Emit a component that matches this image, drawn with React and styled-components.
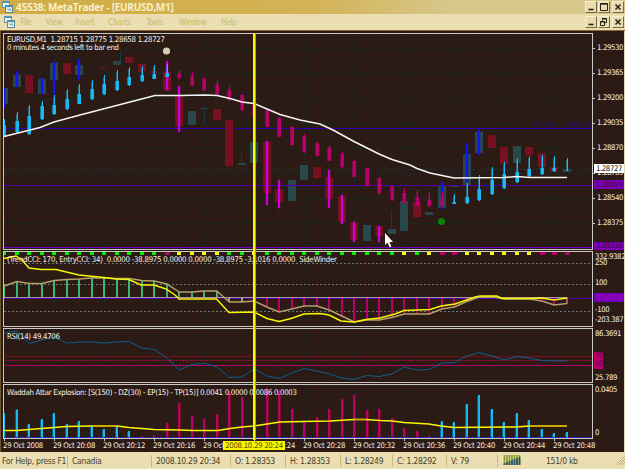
import React from 'react';
import styled, { createGlobalStyle } from 'styled-components';

const C = {
	bg: '#2c1a14',
	cyan: '#18b8f4',
	cyanDark: '#0c5c84',
	pink: '#b8006c',
	magenta: '#e000e0',
	blue: '#1414ff',
	teal: '#28484c',
	purple: '#5000a8',
	yellow: '#f8f800',
	tan: '#b4a06c',
	green: '#3cb474',
	grid: '#182a28',
	frame: '#c8c8c4',
};

// bar number -> x on the chart
const bx = (i) => 4.3 + 12.5 * i;

// [index, kind, top, bottom]
const boxes = [
	[0, 't', 88, 104], [1, 't', 75, 87], [2, 'r', 75, 93], [3, 't', 79, 94], [4, 't', 63, 80],
	[5, 'r', 63, 74], [6, 't', 65, 75], [8, 'r', 67, 68], [9, 't', 61, 65], [10, 'r', 57, 63],
	[11, 'r', 64, 72], [12, 'r', 71, 73], [13, 'r', 72, 91], [14, 'r', 96, 126], [15, 't', 111, 125],
	[16, 't', 108, 109], [17, 'r', 109, 120], [18, 'r', 120, 166], [19, 't', 163, 165], [20, 't', 142, 163],
	[21, 'r', 142, 193], [22, 'r', 189, 202], [23, 't', 180, 201], [24, 't', 165, 180], [25, 'r', 167, 178],
	[26, 'r', 177, 199], [27, 'r', 196, 222], [28, 'r', 222, 240], [29, 't', 225, 241], [30, 'r', 226, 236],
	[31, 't', 229, 234], [32, 't', 201, 231], [33, 'r', 202, 217], [34, 't', 212, 215], [35, 't', 185, 208],
	[36, 't', 185, 187], [37, 't', 154, 185], [38, 't', 132, 153], [39, 'r', 135, 148], [40, 'r', 147, 164],
	[41, 't', 146, 163], [42, 'r', 147, 155], [43, 'r', 153, 167], [44, 'r', 167, 172], [45, 't', 169, 172],
];

// [index, colour, top, bottom]
const bars = [
	[0, 'blue', 88, 108], [1, 'blue', 71, 87], [3, 'blue', 78, 94], [4, 'blue', 62, 94], [6, 'blue', 59, 80],
	[13, 'magenta', 61, 90], [14, 'magenta', 86, 132], [21, 'magenta', 141, 205], [22, 'magenta', 180, 208],
	[26, 'magenta', 170, 208], [27, 'magenta', 195, 224], [28, 'magenta', 222, 242], [30, 'magenta', 226, 242],
	[35, 'blue', 182, 209], [37, 'blue', 143, 182], [38, 'blue', 130, 155],
];

// [index, colour, wick top, wick bottom, body top, body bottom]
const candles = [
	[0, 'cyan', 119, 137, 125, 137], [1, 'cyan', 112, 133, 121, 132], [2, 'cyan', 105, 135, 116, 134],
	[3, 'cyan', 101, 120, 106, 119], [4, 'cyan', 95, 115, 105, 114], [5, 'cyan', 89, 110, 99, 109],
	[6, 'cyan', 84, 104, 94, 104], [7, 'cyan', 80, 100, 89, 99], [8, 'cyan', 75, 95, 84, 94],
	[9, 'cyan', 70, 91, 81, 90], [10, 'cyan', 67, 86, 77, 85], [11, 'cyan', 66, 82, 75, 81],
	[12, 'cyan', 65, 79, 74, 79], [13, 'cyan', 64, 77, 73, 77], [14, 'pink', 70, 79, 74, 78],
	[15, 'pink', 72, 86, 76, 85], [16, 'pink', 77, 91, 79, 90], [17, 'pink', 80, 96, 85, 94],
	[18, 'pink', 86, 101, 90, 100], [19, 'pink', 94, 111, 95, 110], [20, 'pink', 104, 117, 104, 117],
	[21, 'pink', 108, 127, 110, 127], [22, 'pink', 117, 137, 118, 137], [23, 'pink', 126, 146, 127, 145],
	[24, 'pink', 134, 153, 136, 152], [25, 'pink', 141, 156, 143, 156], [26, 'pink', 145, 161, 148, 161],
	[27, 'pink', 152, 168, 154, 167], [28, 'pink', 160, 177, 161, 177], [29, 'pink', 168, 186, 168, 186],
	[30, 'pink', 177, 194, 178, 193], [31, 'pink', 186, 201, 186, 200], [32, 'pink', 188, 204, 193, 203],
	[33, 'pink', 190, 206, 197, 206], [34, 'pink', 192, 207, 200, 206], [35, 'pink', 192, 207, 199, 206],
	[36, 'cyan', 194, 204, 202, 204], [37, 'cyan', 183, 204, 197, 203], [38, 'cyan', 175, 201, 189, 200],
	[39, 'cyan', 167, 195, 180, 194], [40, 'cyan', 162, 189, 174, 188], [41, 'cyan', 158, 183, 172, 182],
	[42, 'cyan', 156, 177, 169, 176], [43, 'cyan', 155, 175, 168, 174], [44, 'cyan', 156, 172, 168, 171],
	[45, 'cyan', 158, 171, 170, 170],
];

const averageLine = '4,136.5 16,133.5 40,127.5 54,122 80,115 105,108.5 130,102 155,95.5 180,95.5 205,95 217,95.5 230,98.5 242,102 254,103.5 267,109 280,114.5 300,120 320,124 333,130 354,141.5 379,154 392,159.5 410,165 417,168.5 430,173 442,175.5 454,178 504,177.5 517,176.5 530,177.5 567,177.5';

const signals = 'gggggggggggggpyyyyggygggggggggggygyppyyyyyyppp';
const signalColor = { g: '#00f000', y: '#f8f800', p: '#b8006c' };

const trendCci = [286, 281.5, 283.5, 283.5, 280.5, 279.5, 279, 278, 278, 278.5, 278.5, 280.5, 281, 284, 292, 292, 291, 291, 302, 302, 301, 307, 312, 309, 306, 306, 310, 316, 322, 320, 320, 317.5, 314, 314, 314, 309, 307, 301.5, 297, 296.5, 299, 299, 299, 301, 305, 303.5];
const entryCci = '4,258.5 16,256 22,260 29,268 41,269.5 56,269.5 79,275 104,277.5 116,279 129,279.5 141,285 154,285 166,289 175,295 179,299 204,299 216.5,299 229,312.5 254,312 267,318.5 279,321.5 291,318.5 304,314 320,313.5 329,315 341,321 354,322 366,319.5 380,318 395,314 404,310.5 430,309.5 441,306 455,304 475,297 480,296 497,296 502,298.5 530,298.5 541,298 554,300 567,298';

const rsi = [333, 331, 343.5, 340, 337, 343, 342, 342, 343, 342, 341.5, 348, 349.5, 358, 370, 364.5, 363, 367, 377.5, 377, 369, 376, 378.5, 373, 368.5, 371, 374, 378, 379.5, 375.5, 376.5, 374, 367, 370, 369.5, 363, 362.5, 356, 352.5, 356, 360, 356.5, 358, 360.5, 361, 361];

const volume = [413, 409.5, 424, 419, 413, 424, 421, 425, 429, 426, 431, 436, 435, 423, 403, 416, 419, 414, 391, 397, 389, 388, 390, 409, 422, 417, 409, 399, 395, 410, 409, 418, 428, 431, 436, 421, 422, 404, 395, 409, 422, 413, 420, 429, 433, 432];
const explosion = '4,430.5 17,430.5 29,429.5 41,428.5 54,427.5 66,426.5 92,426 117,426 129,427.5 142,428.5 154,429.5 180,430 192,430.5 218,430.5 230,428.5 242,427 254,426 267,424 280,422 304,421.5 330,421 354,419.5 366,419.5 380,420.5 392,421 404,422.5 429,424 441,426 454,427.5 516,427 530,426 567,426';

const points = (values) => values.map((y, i) => `${bx(i)},${y}`).join(' ');

const times = ['2008', '20:08', '20:12', '20:16', '20:20', '20:24', '20:28', '20:32', '20:36', '20:40', '20:44', '20:48'];

function Chart({ top, height, children }) {
	return (
		<Plot width="590" height={height} viewBox={`3 ${top} 590 ${height}`}>
			{Array.from({ length: 23 }, (_, i) => (
				<path key={i} d={`M${29.5 + 25 * i} ${top}v${height}`} stroke={C.grid} strokeDasharray="3 3" />
			))}
			{children}
			<path d={`M3.5 ${top}v${height}M592.5 ${top}v${height}`} stroke={C.frame} />
			<path d={`M3 ${top + 0.5}h590M3 ${top + height - 0.5}h590`} stroke={C.frame} />
		</Plot>
	);
}

function PriceChart() {
	return (
		<Chart top={33} height={217}>
			<defs>
				<pattern id="bear" width="4" height="4" patternUnits="userSpaceOnUse">
					<rect width="4" height="4" fill="#6c1416" />
					<rect width="1" height="1" fill="#9c0c48" />
					<rect x="2" y="2" width="1" height="1" fill="#9c0c48" />
				</pattern>
			</defs>
			{Array.from({ length: 8 }, (_, i) => (
				<path key={i} d={`M4 ${48.5 + 25 * i}h588`} stroke={C.grid} strokeDasharray="3 3" />
			))}
			<path d="M4 169.5h588" stroke="#1c2c2c" />
			<path d="M4 128.5h588" stroke="#3000b8" strokeDasharray="1 1" shapeRendering="crispEdges" />
			<path d="M120.5 50v11M241.5 150v13M391.5 210v19M204.5 108v16" stroke="#123c44" />
			{boxes.map(([i, kind, y1, y2]) => (
				<rect key={i} x={Math.round(bx(i) - 4)} y={y1} width="8" height={y2 - y1} fill={kind === 't' ? C.teal : 'url(#bear)'} />
			))}
			<path d="M4 185.5h588" stroke={C.purple} />
			<path d="M4 247.5h588" stroke="#6c00c0" />
			{bars.map(([i, color, y1, y2]) => (
				<rect key={i} x={Math.round(bx(i) - 1)} y={y1} width="2" height={y2 - y1} fill={C[color]} stroke={color === 'blue' ? '#1818b0' : '#a000a8'} strokeWidth=".5" />
			))}
			{candles.map(([i, color, y1, y2, b1, b2]) => (
				<g key={i} fill={C[color]}>
					<rect x={Math.round(bx(i))} y={y1} width="1" height={y2 - y1} />
					<rect x={Math.round(bx(i) - 1)} y={y1 + 2} width="1" height={y2 - y1 - 2} opacity=".5" />
					<rect x={Math.round(bx(i) - 2)} y={b1} width="4" height={b2 - b1} opacity=".6" />
					<rect x={Math.round(bx(i) - 1)} y={b1} width="3" height={b2 - b1} />
				</g>
			))}
			<polyline points={averageLine} fill="none" stroke="#f4f4f0" strokeWidth="1.6" />
			<circle cx="166.5" cy="51" r="3.6" fill="#d8ccb4" />
			<circle cx="441.5" cy="221.5" r="3.5" fill="#088408" />
			<Caption x="7" y="42" textLength="158">EURUSD,M1&nbsp; 1.28715 1.28775 1.28658 1.28727</Caption>
			<Caption x="7" y="50.3" textLength="112">0 minutes 4 seconds left to bar end</Caption>
			<Level x="534" y="126.5" textLength="57">132.8-&nbsp;&nbsp; 1.29000</Level>
			<path d="M385 233v12l2.6-2.2 2 4.4 1.8-.8-2-4.3h3.6z" fill="#fff" />
		</Chart>
	);
}

function CciChart() {
	return (
		<Chart top={251} height={76}>
			<path d="M4 263.5h588M4 284.5h588M4 311.5h588" stroke="#6c7878" strokeDasharray="2 2" />
			<path d="M4 298.5h588" stroke={C.purple} />
			{trendCci.map((y, i) => (
				<rect
					key={i}
					x={Math.round(bx(i) - 1)}
					y={Math.min(y, 298)}
					width="2"
					height={Math.abs(298 - y)}
					fill={i < 18 ? C.green : i < 21 ? C.tan : C.pink}
				/>
			))}
			<path d="M4 297.5h563" stroke="#a89c98" />
			<polyline points={points(trendCci)} fill="none" stroke={C.tan} strokeWidth="1.4" />
			<path d="M567 297v7" stroke={C.tan} />
			<polyline points={entryCci} fill="none" stroke={C.yellow} strokeWidth="1.4" />
			{signals.split('').map((s, i) => (
				<rect key={i} x={Math.round(bx(i) - 2)} y="252" width={s === 'p' ? 5 : 4} height="3" fill={signalColor[s]} />
			))}
			<Caption x="7" y="262" textLength="330">(TrendCCI: 170, EntryCCI: 34)&nbsp; 0.0000 -38.8975 0.0000 0.0000 -38.8975 -3.1016 0.0000&nbsp; SideWinder</Caption>
		</Chart>
	);
}

function RsiChart() {
	return (
		<Chart top={328} height={55}>
			<path d="M5 356.5h587" stroke="#781018" />
			<path d="M5 360.5h587" stroke="#a00c3c" strokeDasharray="2 1" />
			<path d="M5 365.5h587" stroke={C.pink} />
			<polyline points={points(rsi)} fill="none" stroke="#0c6090" />
			<Caption x="7" y="338.5" textLength="53">RSI(14) 49.4706</Caption>
		</Chart>
	);
}

function VolumeChart() {
	return (
		<Chart top={384} height={55}>
			{volume.map((y, i) => {
				const up = i < 11 || i > 34;
				return (
					<g key={i}>
						<rect x={Math.round(bx(i) - 1)} y={y} width="2" height={438 - y} fill={up ? C.cyan : C.pink} />
						<rect x={Math.round(bx(i) + (up ? -2 : 1))} y={y + 1} width="1" height={437 - y} fill={up ? C.cyanDark : '#70101c'} />
					</g>
				);
			})}
			<polyline points={explosion} fill="none" stroke={C.yellow} strokeWidth="1.5" />
			<path d="M92 426h24M354 419.5h12M530 426h37" stroke="#c8a000" strokeWidth="1.5" />
			<path d="M4 437.5h588" stroke="#2828e0" strokeDasharray="2 1" />
			<Caption x="7" y="395" textLength="290">Waddah Attar Explosion: [S(150) - DZ(30) - EP(15) - TP(15)] 0.0041 0.0000 0.0086 0.0003</Caption>
		</Chart>
	);
}

function AppIcon() {
	return (
		<svg width="12" height="12" viewBox="0 0 12 12">
			<rect x=".5" y=".5" width="7" height="6" fill="#e8f0f0" stroke="#6898a8" />
			<path d="M1 1.5h6" stroke="#4890b8" />
			<rect x="3.5" y="4.5" width="7" height="7" fill="#f4f4ec" stroke="#588ca0" />
			<path d="M4 5.5h6" stroke="#4890b8" strokeWidth="1.3" />
			<path d="M5 7.5l1.5 2 1.2-2 1.5 2.5" fill="none" stroke="#68a0b4" />
		</svg>
	);
}

function WindowButtons({ restore }) {
	return (
		<Buttons>
			<WinButton>
				<svg width="10" height="10"><path d="M2.5 7.5h5" stroke="#282418" strokeWidth="1.6" /></svg>
			</WinButton>
			<WinButton>
				{restore ? (
					<svg width="10" height="10" fill="none" stroke="#282418"><path d="M3.5 3.5v-2h4v4h-2M3 2h5M1.5 4.5h4v4h-4zM1 5h5" /></svg>
				) : (
					<svg width="10" height="10" fill="none" stroke="#282418"><path d="M1.5 1.5h7v7h-7zM1 2.2h8" /></svg>
				)}
			</WinButton>
			<WinButton $apart>
				<svg width="10" height="10"><path d="M2.5 2.5l5 5M7.5 2.5l-5 5" stroke="#282418" strokeWidth="1.5" /></svg>
			</WinButton>
		</Buttons>
	);
}

function App() {
	return (
		<Window>
			<GlobalStyle />
			<TitleBar>
				<AppIcon />
				<Title>45538: MetaTrader - [EURUSD,M1]</Title>
				<WindowButtons />
			</TitleBar>
			<MenuBar>
				<AppIcon />
				<Menu>
					<MenuItem $width={26}>File</MenuItem>
					<MenuItem $width={30}>View</MenuItem>
					<MenuItem $width={32}>Insert</MenuItem>
					<MenuItem $width={37}>Charts</MenuItem>
					<MenuItem $width={33}>Tools</MenuItem>
					<MenuItem $width={43}>Window</MenuItem>
					<MenuItem $width={30}>Help</MenuItem>
				</Menu>
				<WindowButtons restore />
			</MenuBar>
			<Workspace>
				<Row>
					<PriceChart />
					<Scale>
						<PriceList>
							{['1.29530', '1.29365', '1.29200', '1.29035', '1.28870', '1.28705', '1.28540', '1.28375'].map((p) => <Price key={p}>{p}</Price>)}
						</PriceList>
						<Tag $top={131} $height={9} $bg="#fff" $color="#202020">1.28727</Tag>
						<Tag $top={147} $height={9} $bg="#8000b8" $color="#30104c">1.28619</Tag>
						<Tag $top={209} $height={8} $bg="#8000b8" $color="#30104c">1.28210</Tag>
					</Scale>
				</Row>
				<Row>
					<CciChart />
					<Scale>
						<Value $space={2}>332.9382</Value>
						<Value $space={-2}>250</Value>
						<Value $space={12}>100</Value>
						<Value $space={19}>-100</Value>
						<Value $space={2}>-203.387</Value>
						<Tag $top={42} $height={9} $bg="#7000c0" $color="#c000a0">0.00000</Tag>
					</Scale>
				</Row>
				<Row>
					<RsiChart />
					<Scale>
						<Value $space={2}>86.3691</Value>
						<Value $space={36}>25.789</Value>
						<Tag $top={24} $height={17} $width={9} $bg="#b8006c" $color="#600838"><span>70</span><span>50</span></Tag>
					</Scale>
				</Row>
				<Row>
					<VolumeChart />
					<Scale>
						<Value $space={2}>0.0405</Value>
						<Value $space={35}>0</Value>
					</Scale>
				</Row>
				<TimeAxis>
					{times.map((t) => <Time key={t}>29 Oct {t}</Time>)}
					<TimeTag>2008.10.29 20:24</TimeTag>
				</TimeAxis>
				<Crosshair />
			</Workspace>
			<StatusBar>
				<Cell $width={68} $pad={2}>For Help, press F1</Cell>
				<Cell $width={84} $pad={4}>Canadia</Cell>
				<Cell $width={79} $pad={4}>2008.10.29 20:34</Cell>
				<Cell $width={55} $pad={4}>O: 1.28353</Cell>
				<Cell $width={55} $pad={4}>H: 1.28353</Cell>
				<Cell $width={52} $pad={4}>L: 1.28249</Cell>
				<Cell $width={54} $pad={4}>C: 1.28292</Cell>
				<Cell $width={51} $pad={4}>V: 79</Cell>
				<Cell $width={127} $pad={5} $last>
					<svg width="18" height="11" viewBox="0 0 18 11">
						<path d="M1.5 0v10M4 0v10M6.5 0v10M9 0v10M11.5 0v10M14 0v10M16.5 0v10" stroke="#889c28" strokeWidth="1.7" />
						<path d="M1.5 8v2M4 7v3M6.5 6v4M9 5v5M11.5 4v6M14 3v7M16.5 2v8" stroke="#245068" strokeWidth="1.7" />
					</svg>
					<Traffic>151/0 kb</Traffic>
					<Grip width="9" height="9" viewBox="0 0 9 9">
						<path d="M0 9l9-9M3 9l6-6M6 9l3-3" stroke="#b8a868" />
					</Grip>
				</Cell>
			</StatusBar>
		</Window>
	);
}

const GlobalStyle = createGlobalStyle`
	body {
		margin: 0;
		background: #2c1a14;
		overflow: hidden;
	}
`;

const Window = styled.div`
	width: 625px;
	height: 469px;
	display: flex;
	flex-direction: column;
	font-family: "DejaVu Sans Condensed", "DejaVu Sans", sans-serif;
	font-stretch: condensed;
	overflow: hidden;
`;

const TitleBar = styled.div`
	box-sizing: border-box;
	height: 14px;
	padding: 0 1px 0 2px;
	display: flex;
	align-items: center;
	position: relative;
	isolation: isolate;
	background: linear-gradient(90deg, #ccb050 0, #d0b660 50%, #d8c88c 72%);

	&::before {
		content: '';
		position: absolute;
		inset: 0;
		z-index: -1;
		background: conic-gradient(#fc9810 25%, transparent 0 50%, #e4a428 0 75%, transparent 0) 0 0 / 2px 2px;
		mask-image: linear-gradient(90deg, rgba(0,0,0,0.6), rgba(0,0,0,0.45) 40%, transparent 73%);
	}
`;

const Title = styled.div`
	margin-left: 2px;
	font: bold 10px/13px "Open Sans", sans-serif;
	letter-spacing: -0.28px;
	color: #f8f0cc;
	white-space: nowrap;
`;

const MenuBar = styled.div`
	box-sizing: border-box;
	height: 17px;
	padding: 0 1px 0 4px;
	display: flex;
	align-items: center;
	border-bottom: 1px solid #8c6430;
	background: conic-gradient(#f0e4b8 25%, #e4d8ac 0 50%, #f0e4b8 0 75%, #e4d8ac 0) 0 0 / 2px 2px;
`;

const Menu = styled.div`
	display: flex;
	margin-left: -3px;
`;

const MenuItem = styled.div`
	width: ${(p) => p.$width}px;
	text-align: center;
	font-size: 8px;
	letter-spacing: -0.2px;
	color: #c8b868;
`;

const Buttons = styled.div`
	display: flex;
	margin-left: auto;
`;

const WinButton = styled.div`
	box-sizing: border-box;
	width: 12px;
	height: 12px;
	margin-left: ${(p) => (p.$apart ? 2 : 1)}px;
	background: #e8dcb0;
	border: 1px solid;
	border-color: #f8f0d0 #786c40 #786c40 #f8f0d0;

	svg {
		display: block;
	}
`;

const Workspace = styled.div`
	box-sizing: border-box;
	height: 421px;
	padding: 2px 1px 0 1px;
	display: flex;
	flex-direction: column;
	gap: 1px;
	position: relative;
	border-left: 1px solid #6c5424;
	border-right: 1px solid #e0d4a8;
	background: ${C.bg};
`;

const Row = styled.div`
	display: flex;
	padding-left: 1px;
`;

const Plot = styled.svg`
	display: block;
	flex: none;
`;

const Caption = styled.text`
	font-size: 7.8px;
	fill: #f4f4f0;
`;

const Level = styled.text`
	font-size: 7px;
	fill: #3000b0;
	opacity: 0.8;
`;

const Scale = styled.div`
	flex: 1;
	position: relative;
	padding-left: 4px;
	min-width: 0;
	color: #f0f0ec;
	font-size: 7.7px;
	letter-spacing: -0.35px;
	white-space: nowrap;
`;

const PriceList = styled.div`
	display: flex;
	flex-direction: column;
	padding-top: 2px;
`;

const Price = styled.div`
	height: 25px;
	line-height: 25px;
	position: relative;

	&::before {
		content: '';
		position: absolute;
		left: -4px;
		top: 13px;
		width: 2px;
		height: 1px;
		background: ${C.frame};
	}
`;

const Value = styled.div`
	margin: ${(p) => p.$space}px 0 0 -2px;
	line-height: 8px;
`;

const Tag = styled.div`
	position: absolute;
	left: 1px;
	top: ${(p) => p.$top}px;
	width: ${(p) => p.$width || 30}px;
	height: ${(p) => p.$height}px;
	line-height: ${(p) => (p.$width ? 8 : p.$height)}px;
	text-align: center;
	overflow: hidden;
	background: ${(p) => p.$bg};
	color: ${(p) => p.$color};

	span {
		display: block;
	}
`;

const TimeAxis = styled.div`
	display: flex;
	position: relative;
	margin-top: -1px;
	padding-left: 1px;
	height: 13px;
	color: #f0f0ec;
	font-size: 7.7px;
	letter-spacing: -0.25px;
	white-space: nowrap;
`;

const Time = styled.div`
	width: 50px;
	flex: none;
	line-height: 13px;
	position: relative;

	&::before {
		content: '';
		position: absolute;
		left: 1px;
		top: 0;
		width: 1px;
		height: 2px;
		background: ${C.frame};
	}
`;

const TimeTag = styled.div`
	position: absolute;
	left: 221px;
	top: 2px;
	width: 62px;
	height: 9px;
	line-height: 9px;
	text-align: center;
	background: #f8f800;
	color: #584c00;
`;

const Crosshair = styled.div`
	position: absolute;
	left: 252px;
	top: 2px;
	width: 2px;
	height: 407px;
	background: #f8f800;
	border-right: 1px solid #a89c40;
`;

const StatusBar = styled.div`
	height: 17px;
	display: flex;
	align-items: center;
	color: #484028;
	font-size: 8.6px;
	background: conic-gradient(#f0e4b8 25%, #e4d8ac 0 50%, #f0e4b8 0 75%, #e4d8ac 0) 0 0 / 2px 2px;
`;

const Cell = styled.div`
	box-sizing: border-box;
	width: ${(p) => p.$width}px;
	height: 12px;
	line-height: 12px;
	padding-left: ${(p) => p.$pad}px;
	display: flex;
	align-items: center;
	flex: none;
	overflow: hidden;
	white-space: nowrap;
	letter-spacing: -0.3px;
	border-right: ${(p) => (p.$last ? 'none' : '1px solid #c8b880')};
`;

const Traffic = styled.div`
	margin-left: 25px;
`;

const Grip = styled.svg`
	margin-left: auto;
`;

export default App;
